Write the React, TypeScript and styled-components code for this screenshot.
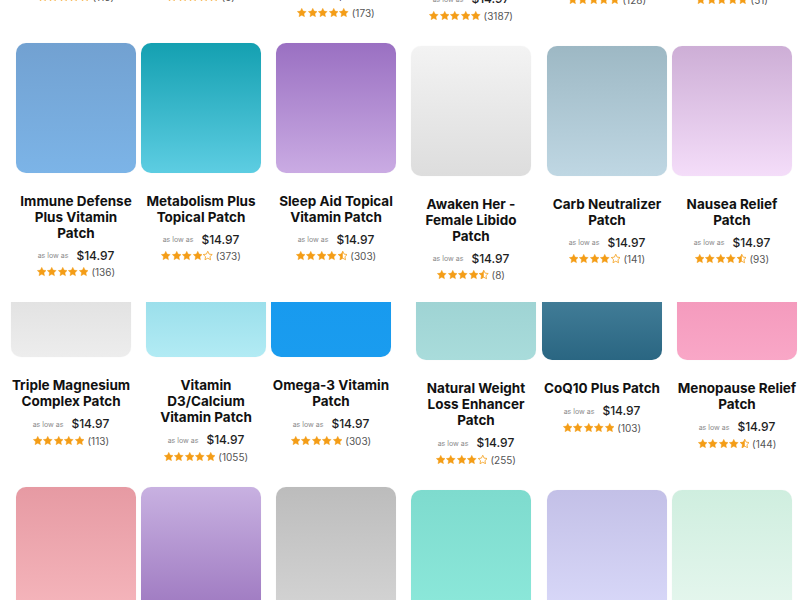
import React, { useId } from 'react';
import styled, { createGlobalStyle } from 'styled-components';

const Global = createGlobalStyle`
  html, body { margin: 0; padding: 0; background: #fff; }
  body { font-family: Inter, "Noto Sans", sans-serif; overflow: hidden; }
`;

type Product = {
  title: string;
  rating: number;
  count: string;
  from: string;
  to: string;
};

type TailItem = { rating: number; count: string; extra: number };

const ROW_A_GAPS = [16, 5, 15, 15, 16, 5];
const ROW_B_GAPS = [11, 15, 5, 25, 6, 15];
const DROPS = [0, 0, 0, 3, 3, 3];

const tail: TailItem[] = [
  { rating: 5, count: '(116)', extra: 0 },
  { rating: 5, count: '(5)', extra: 0 },
  { rating: 5, count: '(173)', extra: 1 },
  { rating: 5, count: '(3187)', extra: 1 },
  { rating: 5, count: '(128)', extra: 0 },
  { rating: 5, count: '(51)', extra: 0 },
];

const row1: Product[] = [
  { title: 'Immune Defense Plus Vitamin Patch', rating: 5, count: '(136)', from: '#72a1d1', to: '#7cb4e7' },
  { title: 'Metabolism Plus Topical Patch', rating: 4, count: '(373)', from: '#14a0b1', to: '#5dcde2' },
  { title: 'Sleep Aid Topical Vitamin Patch', rating: 4.5, count: '(303)', from: '#9a70c2', to: '#caabe3' },
  { title: 'Awaken Her - Female Libido Patch', rating: 4.5, count: '(8)', from: '#f3f3f3', to: '#dddddd' },
  { title: 'Carb Neutralizer Patch', rating: 4, count: '(141)', from: '#9db8c4', to: '#bfd7e3' },
  { title: 'Nausea Relief Patch', rating: 4.5, count: '(93)', from: '#cdaed6', to: '#f4ddf9' },
];

const row2: Product[] = [
  { title: 'Triple Magnesium Complex Patch', rating: 5, count: '(113)', from: '#d4d4d4', to: '#ededed' },
  { title: 'Vitamin D3/Calcium Vitamin Patch', rating: 5, count: '(1055)', from: '#7ccfdf', to: '#b2ebf4' },
  { title: 'Omega-3 Vitamin Patch', rating: 5, count: '(303)', from: '#1598ee', to: '#1a9cef' },
  { title: 'Natural Weight Loss Enhancer Patch', rating: 4, count: '(255)', from: '#92c9cb', to: '#a9dcdb' },
  { title: 'CoQ10 Plus Patch', rating: 5, count: '(103)', from: '#5d97b0', to: '#2a6682' },
  { title: 'Menopause Relief Patch', rating: 4.5, count: '(144)', from: '#ee8cb1', to: '#f9a7c7' },
];

const row3: Product[] = [
  { title: 'Pain Relief Patch', rating: 4.5, count: '(212)', from: '#e69aa3', to: '#f6b7bd' },
  { title: 'Hair, Skin & Nails Patch', rating: 4.5, count: '(187)', from: '#c8b1e1', to: '#9c76bf' },
  { title: 'Detox Patch', rating: 4, count: '(64)', from: '#bcbcbc', to: '#d5d5d5' },
  { title: 'Energy Plus Patch', rating: 5, count: '(96)', from: '#7edbce', to: '#8de9db' },
  { title: 'Focus Patch', rating: 4.5, count: '(57)', from: '#c3c0e7', to: '#dadafa' },
  { title: 'Probiotic Patch', rating: 4.5, count: '(41)', from: '#cfeedf', to: '#e7f7ef' },
];

const Page = styled.main`
  width: 800px;
  height: 600px;
  overflow: hidden;
  background: #fff;
`;

const Row = styled.section<{ $cover?: boolean; $pull?: number }>`
  position: relative;
  z-index: ${(p) => (p.$cover ? 1 : 0)};
  background: ${(p) => (p.$cover ? '#fff' : 'transparent')};
  display: flex;
  align-items: flex-start;
  padding-bottom: 21px;
  margin-top: ${(p) => p.$pull ?? 0}px;
`;

const Card = styled.article<{ $ml: number; $drop: number }>`
  flex: 0 0 120px;
  width: 120px;
  margin-left: ${(p) => p.$ml}px;
  padding-top: ${(p) => p.$drop}px;
  display: flex;
  flex-direction: column;
  align-items: center;
`;

const Thumb = styled.div<{ $from: string; $to: string }>`
  width: 120px;
  height: 130px;
  border-radius: 10px;
  background: linear-gradient(180deg, ${(p) => p.$from}, ${(p) => p.$to});
  box-shadow: 0 0 1px rgba(0, 0, 0, 0.08);
`;

const Title = styled.h3`
  margin: 20px 0 0;
  width: 120px;
  font-family: Inter, "Noto Sans", sans-serif;
  font-weight: 700;
  font-size: 13.5px;
  line-height: 16px;
  color: #111;
  text-align: center;
`;

const PriceLine = styled.div<{ $flush?: boolean }>`
  margin-top: ${(p) => (p.$flush ? 0 : 8)}px;
  height: 14px;
  display: flex;
  align-items: center;
  justify-content: center;
  gap: 8px;
`;

const Low = styled.span`
  font-family: Inter, sans-serif;
  font-size: 7px;
  line-height: 1;
  color: #8a8a8a;
`;

const Price = styled.span`
  font-family: Inter, sans-serif;
  font-weight: 500;
  font-size: 12px;
  line-height: 14px;
  color: #1e1e1e;
`;

const RatingLine = styled.div`
  margin-top: 3.5px;
  height: 12px;
  display: flex;
  align-items: center;
  justify-content: center;
  gap: 3px;
`;

const Stars = styled.span`
  display: flex;
  gap: 1px;
`;

const StarSvg = styled.svg`
  width: 9.5px;
  height: 9.5px;
  display: block;
`;

const Count = styled.span`
  font-family: Inter, sans-serif;
  font-size: 10px;
  line-height: 12px;
  color: #555;
`;

const STAR = 'M12 2.4l2.95 6.1 6.65.85-4.9 4.6 1.25 6.6L12 17.3l-5.95 3.25 1.25-6.6-4.9-4.6 6.65-.85z';
const GOLD = '#f49d17';

function Star({ kind }: { kind: 'full' | 'half' | 'empty' }) {
  const id = useId().replace(/:/g, '');
  return (
    <StarSvg viewBox="1.8 1.8 20.4 20.4">
      {kind === 'half' && (
        <defs>
          <clipPath id={id}>
            <rect x="0" y="0" width="12" height="24" />
          </clipPath>
        </defs>
      )}
      {kind === 'full' ? (
        <path d={STAR} fill={GOLD} stroke={GOLD} strokeWidth={0.8} strokeLinejoin="round" />
      ) : (
        <path d={STAR} fill="none" stroke={GOLD} strokeWidth={1.7} strokeLinejoin="round" />
      )}
      {kind === 'half' && <path d={STAR} fill={GOLD} clipPath={`url(#${id})`} />}
    </StarSvg>
  );
}

function Rating({ rating, count }: { rating: number; count: string }) {
  const kinds = [0, 1, 2, 3, 4].map((i) =>
    rating >= i + 1 ? 'full' : rating >= i + 0.5 ? 'half' : 'empty'
  ) as ('full' | 'half' | 'empty')[];
  return (
    <RatingLine>
      <Stars>
        {kinds.map((k, i) => (
          <Star key={i} kind={k} />
        ))}
      </Stars>
      <Count>{count}</Count>
    </RatingLine>
  );
}

function PriceRow({ flush }: { flush?: boolean }) {
  return (
    <PriceLine $flush={flush}>
      <Low>as low as</Low>
      <Price>$14.97</Price>
    </PriceLine>
  );
}

function ProductRow({ items, gaps, cover, pull }: { items: Product[]; gaps: number[]; cover?: boolean; pull?: number }) {
  return (
    <Row $cover={cover} $pull={pull}>
      {items.map((p, i) => (
        <Card key={p.title} $ml={gaps[i]} $drop={DROPS[i]}>
          <Thumb $from={p.from} $to={p.to} />
          <Title>{p.title}</Title>
          <PriceRow />
          <Rating rating={p.rating} count={p.count} />
        </Card>
      ))}
    </Row>
  );
}

export default function App() {
  return (
    <>
      <Global />
      <Page>
        <Row $pull={-27}>
          {tail.map((t, i) => (
            <Card key={i} $ml={ROW_A_GAPS[i]} $drop={DROPS[i] + t.extra * 16}>
              <PriceRow flush />
              <Rating rating={t.rating} count={t.count} />
            </Card>
          ))}
        </Row>
        <ProductRow items={row1} gaps={ROW_A_GAPS} cover />
        <ProductRow items={row2} gaps={ROW_B_GAPS} pull={-75} />
        <ProductRow items={row3} gaps={ROW_A_GAPS} />
      </Page>
    </>
  );
}
